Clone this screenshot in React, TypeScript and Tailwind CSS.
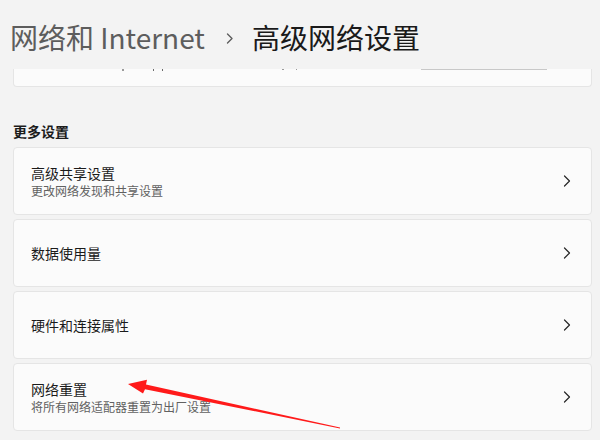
import React from 'react';

const font = { fontFamily: '"Noto Sans CJK SC", "Noto Sans", sans-serif' };

interface RowProps {
  title: string;
  subtitle?: string;
}

const Chevron: React.FC = () => (
  <svg width="8" height="12" viewBox="0 0 8 12" className="shrink-0">
    <path d="M1.5 1 L6.5 6 L1.5 11" fill="none" stroke="#262626" strokeWidth="1.2" strokeLinecap="round" strokeLinejoin="round" />
  </svg>
);

const SettingRow: React.FC<RowProps> = ({ title, subtitle }) => (
  <div className="h-[68px] rounded-[4px] border border-[#e5e5e5] bg-[#fbfbfb] pl-[17px] pr-[20px] flex items-center justify-between">
    <div className="flex flex-col">
      <span className="text-[14px] leading-[20px] text-[#1b1b1b]">{title}</span>
      {subtitle && <span className="text-[12px] leading-[16px] text-[#616161]">{subtitle}</span>}
    </div>
    <Chevron />
  </div>
);

const App: React.FC = () => {
  return (
    <div className="relative w-[600px] h-[440px] overflow-hidden bg-[#f3f3f3]" style={font}>
      {/* header */}
      <div className="h-[69px] flex items-start pt-[17px] pl-[10px]">
        <span className="text-[28px] leading-[40px] text-[#5d5d5d]">网络和 Internet</span>
        <svg width="10" height="40" viewBox="0 0 10 40" className="ml-[20px] mr-[17px] shrink-0">
          <path d="M2.5 17 L7 21.5 L2.5 26" fill="none" stroke="#5d5d5d" strokeWidth="1.4" strokeLinecap="round" strokeLinejoin="round" />
        </svg>
        <span className="text-[28px] leading-[40px] text-[#1a1a1a]">高级网络设置</span>
      </div>

      {/* scrolled card fragment */}
      <div className="mx-[13px] w-[579px] h-[18px] rounded-b-[4px] border border-t-0 border-[#e5e5e5] bg-[#fbfbfb] relative">
        <div className="absolute top-0 left-[108px] w-[2px] h-[2px] bg-[#9a9a9a]" />
        <div className="absolute top-0 left-[139px] w-[1px] h-[2px] bg-[#6a6a6a]" />
        <div className="absolute top-0 left-[148px] w-[1px] h-[2px] bg-[#6a6a6a]" />
        <div className="absolute top-0 left-[268px] w-[2px] h-[1px] bg-[#9a9a9a]" />
        <div className="absolute top-0 left-[282px] w-[1px] h-[1px] bg-[#9a9a9a]" />
        <div className="absolute top-0 left-[407px] w-[126px] h-[1px] bg-[#c8c8c8]" />
      </div>

      {/* more settings */}
      <div className="px-[12px] pt-[34px]">
        <div className="text-[14px] leading-[20px] font-semibold text-[#1b1b1b] pl-[1px]">更多设置</div>
        <div className="mt-[6px] flex flex-col gap-[4px] pl-[1px] w-[580px]">
          <SettingRow title="高级共享设置" subtitle="更改网络发现和共享设置" />
          <SettingRow title="数据使用量" />
          <SettingRow title="硬件和连接属性" />
          <SettingRow title="网络重置" subtitle="将所有网络适配器重置为出厂设置" />
        </div>
      </div>

      {/* annotation arrow */}
      <svg className="absolute inset-0 pointer-events-none" width="600" height="440" viewBox="0 0 600 440">
        <polygon
          points="128,384 147,379.8 146,384.6 340,427.6 340,428.4 145,389.2 143,393.6"
          fill="#ff1a1a"
        />
      </svg>
    </div>
  );
};

export default App;
